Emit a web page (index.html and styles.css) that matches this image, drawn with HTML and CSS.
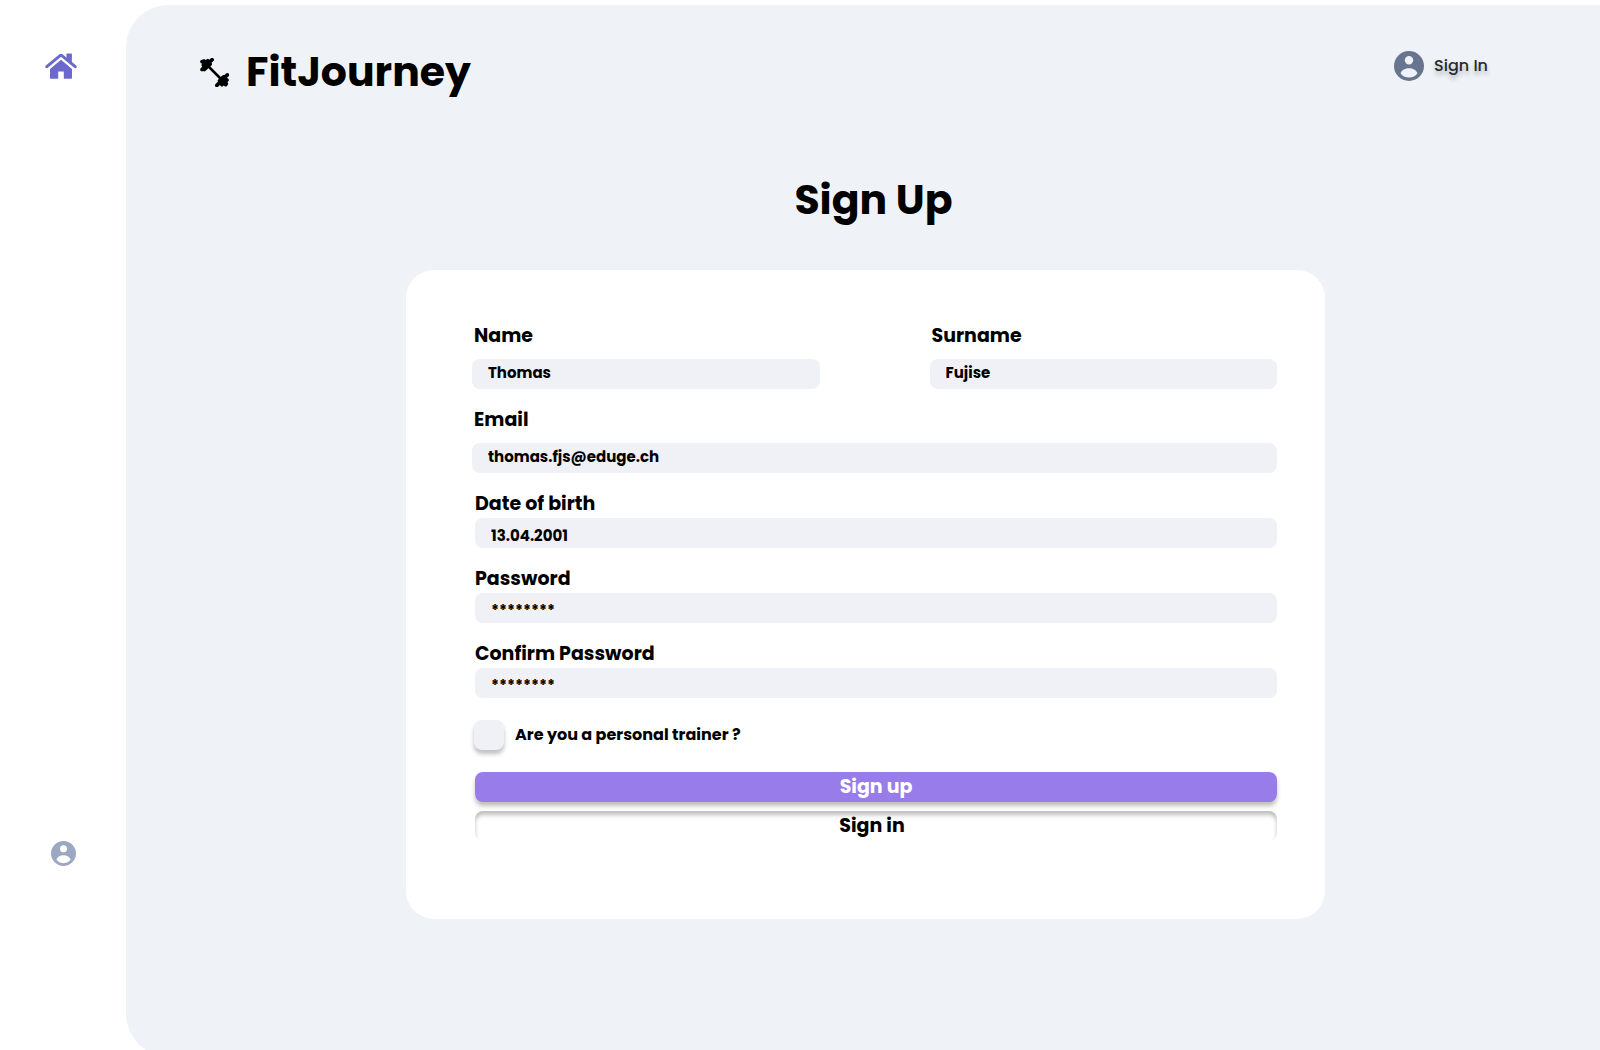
FILE: index.html
```html
<!DOCTYPE html>
<html lang="en">
<head>
  <meta charset="utf-8">
  <meta name="viewport" content="width=device-width, initial-scale=1">
  <title>FitJourney - Sign Up</title>
  <link rel="stylesheet" href="styles.css">
</head>
<body>
  <div class="shell">
    <nav class="sidebar" aria-label="Main">
      <a class="sidebar-link" href="#home" aria-label="Home">
        <svg class="icon-home" viewBox="0 0 32 26" aria-hidden="true">
          <path d="M21.500 5V1.200Q21.500 .5 22.200 .5h4q.7 0 .7.7V10l-5.400-4.500z"/>
          <path d="M1.800 13.700L14.800 2.800q1.200-1 2.400 0l13 10.900" fill="none" stroke="currentColor" stroke-width="3" stroke-linecap="round"/>
          <path d="M16 6.800L27 16v9q0 .8-.8.8h-7.400v-7.300h-5.600v7.300H5.800q-.8 0-.8-.8v-9z"/>
        </svg>
      </a>
      <a class="sidebar-link sidebar-user" href="#profile" aria-label="Profile">
        <svg class="icon-user-small" viewBox="0 0 30 30" aria-hidden="true">
          <path fill-rule="evenodd" d="M15 0a15 15 0 1 1 0 30a15 15 0 0 1 0-30zM15 5a4.200 4.200 0 1 0 0 8.400a4.200 4.200 0 0 0 0-8.400zM6.500 22.300C9.500 28 20.500 28 23.500 22.300C21 15.500 9 15.500 6.500 22.300z"/>
        </svg>
      </a>
    </nav>

    <div class="panel">
      <header class="header">
        <a class="brand" href="#home">
          <svg class="icon-dumbbell" viewBox="0 0 86 86" aria-hidden="true">
            <path d="M22 22L66 66" stroke-width="8"/>
            <path d="M6 34L36 5M10 21L23 8M6 11L12 9M13 34L30 18" stroke-width="11"/>
            <path d="M50 81L81 50M65 79L80 65M76 79L78 76M58 68L70 56" stroke-width="11"/>
          </svg>
          <span class="brand-name">FitJourney</span>
        </a>
        <a class="account" href="#signin">
          <svg class="icon-user" viewBox="0 0 30 30" aria-hidden="true">
            <path fill-rule="evenodd" d="M15 0a15 15 0 1 1 0 30a15 15 0 0 1 0-30zM15 5a4.200 4.200 0 1 0 0 8.400a4.200 4.200 0 0 0 0-8.400zM6.500 22.300C9.500 28 20.500 28 23.500 22.300C21 15.500 9 15.500 6.500 22.300z"/>
          </svg>
          <span>Sign In</span>
        </a>
      </header>

      <main class="main">
        <h1 class="title">Sign Up</h1>
        <form class="card">
          <div class="name-row">
            <div class="field">
              <label for="name">Name</label>
              <input id="name" type="text" value="Thomas">
            </div>
            <div class="field">
              <label for="surname">Surname</label>
              <input id="surname" type="text" value="Fujise">
            </div>
          </div>
          <div class="field">
            <label for="email">Email</label>
            <input id="email" type="email" value="thomas.fjs@eduge.ch">
          </div>
          <div class="field compact">
            <label for="birth">Date of birth</label>
            <input id="birth" type="text" value="13.04.2001">
          </div>
          <div class="field compact">
            <label for="password">Password</label>
            <input id="password" type="text" value="********" autocomplete="off">
          </div>
          <div class="field compact">
            <label for="confirm">Confirm Password</label>
            <input id="confirm" type="text" value="********" autocomplete="off">
          </div>
          <div class="trainer">
            <input id="trainer" type="checkbox">
            <label for="trainer">Are you a personal trainer ?</label>
          </div>
          <div class="actions">
            <button class="button primary" type="submit">Sign up</button>
            <button class="button plain" type="button">Sign in</button>
          </div>
        </form>
      </main>
    </div>
  </div>
</body>
</html>
```
FILE: styles.css
```css
* {
  box-sizing: border-box;
}

body {
  margin: 0;
  background: #fff;
  color: #000;
  font-family: Poppins, Inter, "Liberation Sans", sans-serif;
  font-weight: 700;
}

a {
  color: inherit;
  text-decoration: none;
}

svg {
  display: block;
  fill: currentColor;
}

.shell {
  display: grid;
  grid-template-columns: 126px 1fr;
  min-height: 100vh;
  overflow: hidden;
}

.sidebar {
  display: flex;
  flex-direction: column;
  align-items: center;
  justify-content: space-between;
  padding: 53px 4px 184px 0;
}

.sidebar-link {
  color: #6c69cc;
}

.sidebar-user {
  margin-left: 4px;
  color: #9ca7c2;
}

.icon-home {
  width: 32px;
  height: 26px;
}

.icon-user-small {
  width: 25px;
  height: 25px;
}

.panel {
  margin: 5px 0 -6px;
  border-radius: 42px 0 0 42px;
  background: #eff3f8;
}

.header {
  display: flex;
  align-items: flex-start;
  justify-content: space-between;
  padding: 37px 112px 0 74px;
}

.brand {
  display: flex;
  align-items: center;
  gap: 17px;
  line-height: 60px;
}

.brand-name {
  font-size: 41px;
}

.icon-dumbbell {
  width: 29px;
  height: 29px;
  fill: none;
  stroke: currentColor;
  stroke-linecap: round;
}

.account {
  display: flex;
  align-items: center;
  gap: 10px;
  margin-top: 9px;
  color: #26292e;
  font-size: 16px;
  font-weight: 500;
  line-height: 30px;
  text-shadow: 0 4px 4px rgba(0, 0, 0, 0.25);
}

.icon-user {
  width: 30px;
  height: 30px;
  color: #68758f;
}

.main {
  padding: 68px 0 64px 5px;
}

.title {
  margin: 0 0 40px;
  padding-left: 16px;
  font-size: 41px;
  line-height: 60px;
  text-align: center;
}

.card {
  display: flex;
  flex-direction: column;
  gap: 18px;
  max-width: 919px;
  margin: 0 auto;
  padding: 53px 48px 78px 66px;
  border-radius: 28px;
  background: #fff;
}

.name-row {
  display: grid;
  grid-template-columns: 1fr 1fr;
  gap: 110px;
}

.field {
  display: flex;
  flex-direction: column;
  gap: 10px;
}

.field label {
  padding-left: 2px;
  font-size: 19px;
  line-height: 26px;
}

.field input {
  width: 100%;
  height: 30px;
  padding: 0 16px 4px;
  border: 0;
  border-radius: 8px;
  background: #f0f1f7;
  color: inherit;
  font: inherit;
  font-size: 15px;
}

.compact {
  gap: 1px;
  margin-left: 3px;
}

.compact label {
  padding-left: 0;
}

.compact input {
  padding: 4px 16px 0;
}

.trainer {
  display: flex;
  align-items: center;
  gap: 11px;
  margin: 4px 0 4px 2px;
  font-size: 16px;
  line-height: 30px;
}

.trainer input {
  appearance: none;
  width: 30px;
  height: 30px;
  margin: 0;
  border-radius: 8px;
  background: #f0f1f7;
  box-shadow: 0 4px 4px rgba(0, 0, 0, 0.25);
}

.actions {
  display: grid;
  gap: 9px;
  margin-left: 3px;
}

.button {
  height: 30px;
  padding: 0;
  border: 0;
  border-radius: 8px;
  font: inherit;
  font-size: 19px;
  line-height: 30px;
}

.primary {
  background: #987dea;
  color: #fff;
  box-shadow: 0 4px 4px rgba(0, 0, 0, 0.25);
}

.plain {
  padding-right: 8px;
  background: #fff;
  color: inherit;
  box-shadow: inset 0 4px 4px rgba(0, 0, 0, 0.25);
}
```
